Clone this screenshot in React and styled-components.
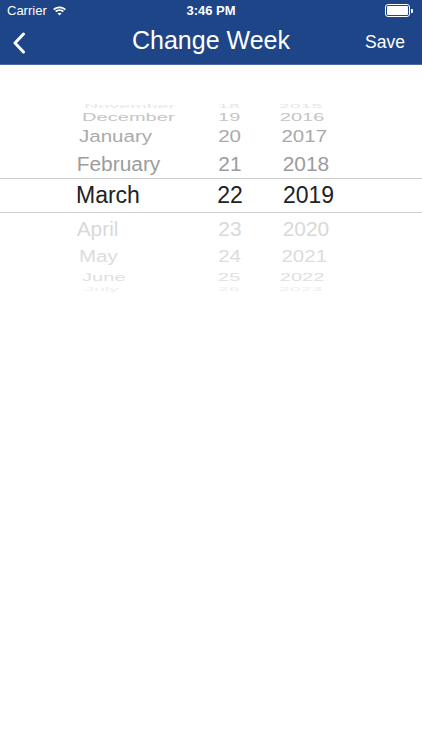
import React from "react"
import styled, { createGlobalStyle } from "styled-components"

const Global = createGlobalStyle`
  html, body { margin: 0; padding: 0; background: #fff; }
  body { font-family: "Liberation Sans", Arial, sans-serif; }
`

const Screen = styled.div`
  width: 422px;
  height: 750px;
  background: #fff;
  overflow: hidden;
`

const Header = styled.div`
  background: #1d4587;
  color: #fff;
  border-bottom: 1px solid #4b6aa0;
`

const StatusBar = styled.div`
  height: 21px;
  display: grid;
  grid-template-columns: 1fr auto 1fr;
  align-items: center;
  padding: 0 7px;
  font-size: 13px;
`

const Carrier = styled.div`
  display: flex;
  align-items: center;
  gap: 5px;
`

const Clock = styled.div`
  font-weight: bold;
`

const Battery = styled.div`
  justify-self: end;
  display: flex;
  align-items: center;
  margin-right: 2px;
`

const BatteryBody = styled.div`
  width: 21px;
  height: 9px;
  border: 1px solid #fff;
  border-radius: 3px;
  padding: 1px;
  box-sizing: content-box;
  &::after {
    content: "";
    display: block;
    width: 100%;
    height: 100%;
    background: #fff;
    border-radius: 1px;
  }
`

const BatteryCap = styled.div`
  width: 2px;
  height: 4px;
  background: #fff;
  border-radius: 0 1px 1px 0;
  margin-left: 1px;
`

const NavBar = styled.div`
  height: 43px;
  display: grid;
  grid-template-columns: 60px 1fr 60px;
  align-items: center;
`

const Back = styled.div`
  padding-left: 12px;
  display: flex;
  align-items: center;
`

const Title = styled.div`
  text-align: center;
  font-size: 25px;
  margin-top: -4px;
`

const Save = styled.div`
  font-size: 17.5px;
  margin-top: -1px;
  padding-left: 3px;
`

const Picker = styled.div`
  margin-top: 35px;
  display: flex;
  flex-direction: column;
`

const Row = styled.div`
  height: ${p => p.$h}px;
  display: grid;
  grid-template-columns: 76px 137px 34px 36px 1fr;
  align-items: center;
  color: ${p => p.$color};
  font-size: ${p => p.$size}px;
  transform: scale(${p => p.$sx}, ${p => p.$sy});
  transform-origin: 211px 50%;
  white-space: nowrap;
  line-height: 1;
`

const Selected = styled.div`
  border-top: 1px solid #cfcfcf;
  border-bottom: 1px solid #cfcfcf;
`

const Month = styled.div`
  grid-column: 2;
`

const Day = styled.div`
  grid-column: 3;
  text-align: center;
`

const Year = styled.div`
  grid-column: 5;
`

const above = [
  { m: "November", d: "18", y: "2015", h: 8, sy: 0.28, sx: 0.94, c: "#e6e6e6" },
  { m: "December", d: "19", y: "2016", h: 15, sy: 0.55, sx: 0.955, c: "#c4c4c4" },
  { m: "January", d: "20", y: "2017", h: 25, sy: 0.8, sx: 0.978, c: "#a9a9a9" },
  { m: "February", d: "21", y: "2018", h: 30, sy: 0.94, sx: 0.995, c: "#9c9c9c" },
]

const below = [
  { m: "April", d: "23", y: "2020", h: 30, sy: 0.94, sx: 0.995, c: "#d9d9d9" },
  { m: "May", d: "24", y: "2021", h: 25, sy: 0.8, sx: 0.978, c: "#dcdcdc" },
  { m: "June", d: "25", y: "2022", h: 15, sy: 0.55, sx: 0.955, c: "#e0e0e0" },
  { m: "July", d: "26", y: "2023", h: 8, sy: 0.28, sx: 0.94, c: "#eeeeee" },
]

function PickerRow({ r }) {
  return (
    <Row $h={r.h} $sy={r.sy} $sx={r.sx} $color={r.c} $size={21}>
      <Month>{r.m}</Month>
      <Day>{r.d}</Day>
      <Year>{r.y}</Year>
    </Row>
  )
}

function Wifi() {
  return (
    <svg width="15" height="11" viewBox="0 0 15 11">
      <path d="M7.5 3.2c2 0 3.8.8 5.1 2.1l1.3-1.3C12.3 2.4 10 1.4 7.5 1.4S2.7 2.4 1.1 4l1.3 1.3c1.3-1.3 3.1-2.1 5.1-2.1z" fill="#fff" />
      <path d="M7.5 6c1.2 0 2.3.5 3.1 1.3l1.3-1.3C10.8 4.9 9.2 4.2 7.5 4.2S4.2 4.9 3.1 6l1.3 1.3C5.2 6.5 6.3 6 7.5 6z" fill="#fff" />
      <path d="M7.5 10.6l2-2c-.5-.5-1.200-.8-2-.8s-1.5.3-2 .8z" fill="#fff" />
    </svg>
  )
}

export default function App() {
  return (
    <Screen>
      <Global />
      <Header>
        <StatusBar>
          <Carrier>Carrier <Wifi /></Carrier>
          <Clock>3:46 PM</Clock>
          <Battery>
            <BatteryBody />
            <BatteryCap />
          </Battery>
        </StatusBar>
        <NavBar>
          <Back>
            <svg width="14" height="22" viewBox="0 0 14 22">
              <path d="M11.5 2 L3 11 L11.5 20" stroke="#fff" strokeWidth="3" fill="none" strokeLinecap="round" strokeLinejoin="round" />
            </svg>
          </Back>
          <Title>Change Week</Title>
          <Save>Save</Save>
        </NavBar>
      </Header>

      <Picker>
        {above.map(r => <PickerRow key={r.m} r={r} />)}
        <Selected>
          <Row $h={33} $sy={1} $sx={1} $color="#222" $size={23}>
            <Month>March</Month>
            <Day>22</Day>
            <Year>2019</Year>
          </Row>
        </Selected>
        {below.map(r => <PickerRow key={r.m} r={r} />)}
      </Picker>
    </Screen>
  )
}
